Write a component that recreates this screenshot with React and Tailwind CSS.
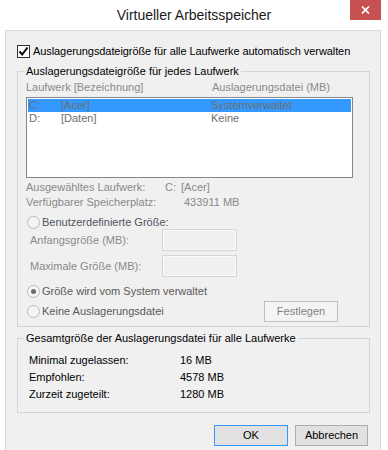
import { useState } from "react";

const Radio = ({ checked }) => (
  <span className="w-[13px] h-[13px] rounded-full border border-[#bcbcbc] bg-[#f4f4f4] flex items-center justify-center shrink-0">
    {checked ? <span className="w-[5px] h-[5px] rounded-full bg-[#6d6d6d]" /> : null}
  </span>
);

const SizeField = ({ label }) => (
  <div className="flex items-center h-[22px] pl-[4px] text-[#8a8a8a]">
    <span className="w-[132px]">{label}</span>
    <span className="w-[75px] h-[22px] border border-[#d5d5d5] bg-[#f0f0f0] shadow-[inset_0_0_0_1px_#f9f9f9]" />
  </div>
);

const drives = [
  { id: "C:", name: "[Acer]", file: "Systemverwaltet" },
  { id: "D:", name: "[Daten]", file: "Keine" },
];

const totals = [
  ["Minimal zugelassen:", "16 MB"],
  ["Empfohlen:", "4578 MB"],
  ["Zurzeit zugeteilt:", "1280 MB"],
];

export default function App() {
  const [auto, setAuto] = useState(true);
  const [selected, setSelected] = useState(0);

  return (
    <div className="w-[388px] h-[450px] overflow-hidden bg-white relative font-['Liberation_Sans',Arial,sans-serif] text-[11px] text-black">
      {/* Title bar */}
      <div className="h-[30px] flex items-center justify-center text-[14px] text-[#1a1a1a]">
        Virtueller Arbeitsspeicher
      </div>
      <button className="absolute left-[350px] top-0 w-[31px] h-[20px] bg-[#c75050] flex items-center justify-center">
        <svg width="9" height="8" viewBox="0 0 9 8">
          <path d="M1 0.5 L8 7.5 M8 0.5 L1 7.5" stroke="#fff" strokeWidth="1.7" />
        </svg>
      </button>

      {/* Client area */}
      <div className="ml-[5px] w-[376px] h-[420px] border border-b-0 border-[#d9d9d9] bg-[#f0f0f0] pt-[14px] pl-[11px]">
        <label className="flex items-center h-[13px] cursor-default" onClick={() => setAuto(!auto)}>
          <span className="w-[13px] h-[13px] border border-[#333] bg-white flex items-center justify-center shrink-0">
            {auto ? (
              <svg width="11" height="11" viewBox="0 0 11 11">
                <path d="M1.5 5.5 L4.2 8.5 L9.5 1.5" fill="none" stroke="#000" strokeWidth="2" />
              </svg>
            ) : null}
          </span>
          <span className="ml-[3px] tracking-[-0.08px]">Auslagerungsdateigröße für alle Laufwerke automatisch verwalten</span>
        </label>

        {/* Per drive */}
        <fieldset className="mt-[6px] w-[353px] border border-[#d5d5d5] pl-[8px] pr-[16px] pb-[4px]">
          <legend className="ml-[-2px] px-[2px] leading-[14px]">Auslagerungsdateigröße für jedes Laufwerk</legend>

          <div className="mt-[2px] h-[14px] leading-[14px] flex text-[#8a8a8a]">
            <span className="w-[186px]">Laufwerk [Bezeichnung]</span>
            <span>Auslagerungsdatei (MB)</span>
          </div>

          <div className="mt-[3px] w-[327px] h-[81px] border border-[#828790] bg-white p-[1px]">
            {drives.map((d, i) => (
              <div
                key={d.id}
                onClick={() => setSelected(i)}
                className={`flex h-[13px] leading-[13px] pl-[1px] text-[#6d6d6d] ${selected === i ? "bg-[#3399ff]" : ""}`}
              >
                <span className="w-[32px]">{d.id}</span>
                <span className="w-[150px]">{d.name}</span>
                <span>{d.file}</span>
              </div>
            ))}
          </div>

          <div className="mt-[2px] h-[14px] leading-[14px] flex text-[#8a8a8a]">
            <span className="w-[139px]">Ausgewähltes Laufwerk:</span>
            <span className="w-[16px]">C:</span>
            <span>[Acer]</span>
          </div>
          <div className="mt-[1px] h-[14px] leading-[14px] flex text-[#8a8a8a]">
            <span className="w-[158px]">Verfügbarer Speicherplatz:</span>
            <span>433911 MB</span>
          </div>

          <div className="mt-[6px] h-[14px] flex items-center pl-[1px]">
            <Radio />
            <span className="ml-[2px] text-[#525260]">Benutzerdefinierte Größe:</span>
          </div>
          <SizeField label="Anfangsgröße (MB):" />
          <div className="mt-[4px]">
            <SizeField label="Maximale Größe (MB):" />
          </div>

          <div className="mt-[7px] h-[14px] flex items-center pl-[1px]">
            <Radio checked />
            <span className="ml-[2px] text-[#5a5a5a]">Größe wird vom System verwaltet</span>
          </div>
          <div className="mt-[3px] h-[21px] flex items-center pl-[1px]">
            <Radio />
            <span className="ml-[2px] text-[#5a5a5a]">Keine Auslagerungsdatei</span>
            <button
              disabled
              className="ml-auto mr-[15px] w-[74px] h-[21px] border border-[#bfbfbf] bg-[#f4f4f4] text-[#838383]"
            >
              Festlegen
            </button>
          </div>
        </fieldset>

        {/* Totals */}
        <fieldset className="mt-[4px] w-[353px] border border-[#d5d5d5] pl-[8px] pb-[9px]">
          <legend className="ml-[-2px] px-[2px] leading-[14px]">Gesamtgröße der Auslagerungsdatei für alle Laufwerke</legend>
          <div className="mt-[7px]">
            {totals.map(([label, value]) => (
              <div key={label} className="flex h-[17px] leading-[17px] pl-[3px]">
                <span className="w-[151px]">{label}</span>
                <span>{value}</span>
              </div>
            ))}
          </div>
        </fieldset>

        <div className="mt-[12px] flex justify-end gap-[7px] pr-[12px]">
          <button className="w-[74px] h-[21px] border border-[#3399ff] bg-[#e1e1e1]">OK</button>
          <button className="w-[73px] h-[21px] border border-[#adadad] bg-[#e1e1e1]">Abbrechen</button>
        </div>
      </div>
    </div>
  );
}
